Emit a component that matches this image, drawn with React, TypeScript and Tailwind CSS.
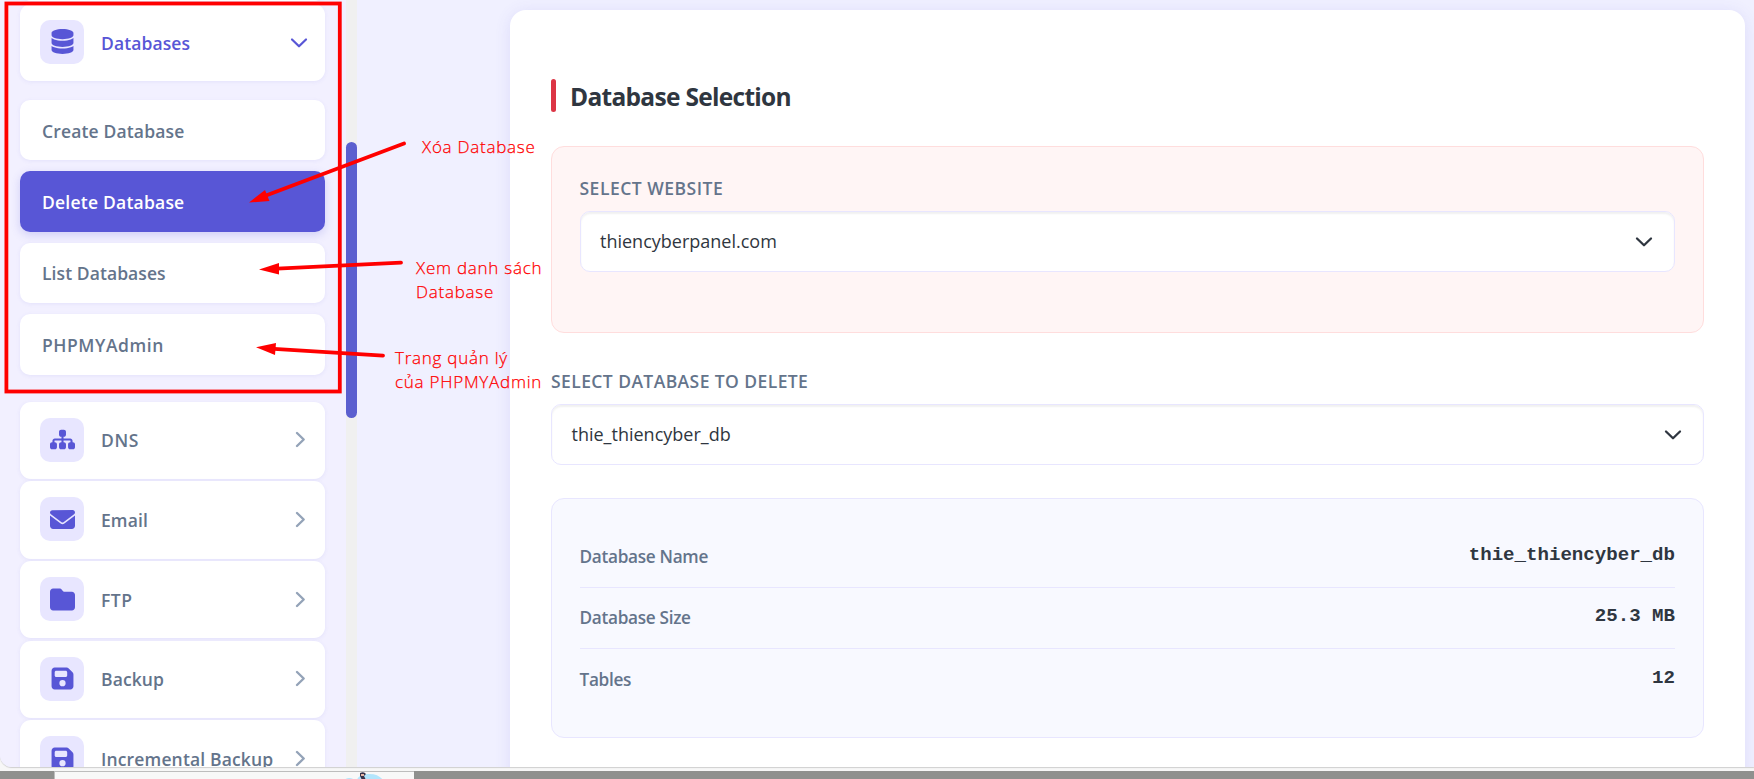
import { ReactNode } from "react";
import { FaDatabase, FaEnvelope, FaFloppyDisk, FaFolder, FaSitemap } from "react-icons/fa6";

function ChevronRight() {
  return (
    <svg width="11" height="17" viewBox="0 0 11 17" fill="none" stroke="#94a3b8" strokeWidth="2.4" strokeLinecap="round" strokeLinejoin="round">
      <path d="M2 2 L8.7 8.5 L2 15" />
    </svg>
  );
}

function ChevronDown({ color, width }: { color: string; width: number }) {
  return (
    <svg width="18" height="12" viewBox="0 0 18 12" fill="none" stroke={color} strokeWidth={width} strokeLinecap="round" strokeLinejoin="round">
      <path d="M2 2.5 L9 9.3 L16 2.5" />
    </svg>
  );
}

function IconTile({ children }: { children: ReactNode }) {
  return (
    <span className="flex h-[44px] w-[44px] shrink-0 items-center justify-center rounded-[10px] bg-[#e8e6ff] text-[25px] text-[#5856d6]">
      {children}
    </span>
  );
}

const cardShadow = "shadow-[0_1px_4px_rgba(88,86,214,0.09)]";

function MenuItem({ icon, label, spacing }: { icon: ReactNode; label: string; spacing: string }) {
  return (
    <div className={`flex h-[77.4px] shrink-0 items-center rounded-[11px] bg-white pr-[19px] pb-[1px] pl-[20px] ${cardShadow}`}>
      <IconTile>{icon}</IconTile>
      <span className={`ml-[17px] flex-1 whitespace-nowrap pt-[1px] text-[17.5px] leading-[26px] font-semibold text-[#64748b] ${spacing}`}>{label}</span>
      <ChevronRight />
    </div>
  );
}

function SubItem({ label, active, spacing }: { label: string; active?: boolean; spacing: string }) {
  return (
    <div
      className={
        active
          ? "flex h-[60.3px] shrink-0 items-center rounded-[10px] bg-[#5856d6] pl-[22px] text-[17.5px] font-semibold text-white shadow-[0_3px_10px_rgba(88,86,214,0.22)]"
          : `flex h-[60.3px] shrink-0 items-center rounded-[10px] bg-white pl-[22px] text-[17.5px] font-semibold text-[#64748b] ${cardShadow}`
      }
    >
      <span className={`whitespace-nowrap pt-[1px] ${spacing}`}>{label}</span>
    </div>
  );
}

function Sidebar() {
  return (
    <aside className="flex h-[767px] w-[346px] shrink-0 flex-col overflow-hidden bg-[#f2f0ff] pr-[21px] pl-[20px]">
      <div className={`-mt-[76.3px] h-[77.3px] shrink-0 rounded-[11px] bg-white ${cardShadow}`} />
      <div className={`mt-[2.7px] flex h-[77.3px] shrink-0 items-center rounded-[11px] bg-white pr-[17px] pb-px pl-[20px] ${cardShadow}`}>
        <IconTile>
          <FaDatabase />
        </IconTile>
        <span className="ml-[17px] flex-1 pt-[3px] text-[17.5px] font-semibold tracking-[0.1px] text-[#5856d6]">Databases</span>
        <span className="pt-[3px]">
          <ChevronDown color="#5856d6" width={2.2} />
        </span>
      </div>
      <div className="mt-[19px] flex shrink-0 flex-col gap-[11.2px]">
        <SubItem label="Create Database" spacing="tracking-[0.15px]" />
        <SubItem label="Delete Database" active spacing="tracking-[0.22px]" />
        <SubItem label="List Databases" spacing="tracking-[0.08px]" />
        <SubItem label="PHPMYAdmin" spacing="tracking-[0.55px]" />
      </div>
      <div className="mt-[26.8px] flex flex-col gap-[2.3px]">
        <MenuItem icon={<FaSitemap />} label="DNS" spacing="tracking-[0.6px]" />
        <MenuItem icon={<FaEnvelope />} label="Email" spacing="tracking-[0.1px]" />
        <MenuItem icon={<FaFolder />} label="FTP" spacing="tracking-[0.5px]" />
        <MenuItem icon={<FaFloppyDisk />} label="Backup" spacing="tracking-[0.1px]" />
        <MenuItem icon={<FaFloppyDisk />} label="Incremental Backup" spacing="tracking-[0.15px]" />
      </div>
    </aside>
  );
}

function SelectBox({ value }: { value: string }) {
  return (
    <div className="flex h-[61px] items-center rounded-[10px] border border-[#e8e6ff] bg-white pr-[21px] pl-[19.5px] shadow-[inset_0_2px_2px_rgba(0,0,0,0.06)]">
      <span className="flex-1 text-[18px] text-[#2f3640]">{value}</span>
      <ChevronDown color="#2f3640" width={2.3} />
    </div>
  );
}

function InfoRow({ label, value, last }: { label: string; value: string; last?: boolean }) {
  return (
    <div className={last ? "flex h-[61px] items-center justify-between" : "flex h-[61px] items-center justify-between border-b border-[#e8e6ff]"}>
      <span className="text-[17.2px] font-semibold tracking-[-0.3px] text-[#64748b]">{label}</span>
      <span className="pb-[3px] font-['Liberation_Mono',monospace] text-[19.1px] font-bold text-[#2f3640]">{value}</span>
    </div>
  );
}

const noteText =
  "absolute text-[17px] leading-[24px] font-light tracking-[0.75px] whitespace-nowrap text-[#ff0000] [-webkit-text-stroke:0.25px_#ff0000]";

function Annotations() {
  return (
    <div className="pointer-events-none absolute inset-0">
      <svg className="absolute inset-0" width="1754" height="779" viewBox="0 0 1754 779" fill="none" stroke="#ff0000" strokeWidth="3.8" strokeLinecap="round">
        <rect x="6.4" y="3.5" width="333.4" height="388" />
        <path d="M404 143.5 L266 195.5 M401 262.7 L277 268.7 M383 355.7 L274 348.8" />
        <path stroke="none" fill="#ff0000" d="M249 202.5 L265 190 L269.5 201 Z M259 269.5 L279 263 L279 274.5 Z M256 347.3 L276 343 L275 355 Z" />
      </svg>
      <p className={`top-[135px] left-[422px] ${noteText}`}>Xóa Database</p>
      <p className={`top-[256px] left-[416px] ${noteText}`}>
        Xem danh sách
        <br />
        Database
      </p>
      <p className={`top-[346px] left-[395px] ${noteText}`}>
        Trang quản lý
        <br />
        của PHPMYAdmin
      </p>
    </div>
  );
}

export default function App() {
  return (
    <div className="relative flex h-[779px] w-[1754px] flex-col overflow-hidden bg-[#f7f7f7] font-['Open_Sans','Noto_Sans',sans-serif]">
      <div className="flex h-[767px] shrink-0 overflow-hidden rounded-bl-[12px] bg-[#f0f0ff] shadow-[0_1px_1px_#cfcfcf]">
        <Sidebar />
        <div className="h-full w-[11px] shrink-0 bg-[#f0f0f0] pt-[142px]">
          <div className="h-[276px] rounded-full bg-[#5b5fcf]" />
        </div>
        <main className="flex-1 pt-[10px] pr-[9px] pl-[153px]">
          <section className="h-[790px] rounded-[16px] bg-white px-[41px] pt-[69px] shadow-[0_2px_16px_rgba(88,86,214,0.12)]">
            <div className="flex h-[33px] items-center">
              <span className="h-full w-[5px] rounded-[2.5px] bg-[#dc3545]" />
              <h2 className="ml-[14px] pt-[3px] text-[24.5px] font-bold tracking-[-0.7px] text-[#2f3640]">Database Selection</h2>
            </div>
            <div className="mt-[34px] h-[187px] rounded-[13px] border border-[#ffdddd] bg-[#fff5f5] pt-[29px] pr-[28px] pl-[27.5px]">
              <div className="h-[35px] text-[17.5px] leading-[24px] font-semibold tracking-[0.5px] text-[#64748b]">SELECT WEBSITE</div>
              <SelectBox value="thiencyberpanel.com" />
            </div>
            <div className="mt-[35px] h-[36px] text-[17.5px] leading-[26px] font-semibold tracking-[0.42px] text-[#64748b]">SELECT DATABASE TO DELETE</div>
            <SelectBox value="thie_thiencyber_db" />
            <div className="mt-[33px] h-[240px] rounded-[13px] border border-[#e8e6ff] bg-[#f8f9ff] pt-[28px] pr-[28px] pl-[27.5px]">
              <InfoRow label="Database Name" value="thie_thiencyber_db" />
              <InfoRow label="Database Size" value="25.3 MB" />
              <InfoRow label="Tables" value="12" last />
            </div>
          </section>
        </main>
      </div>
      <div className="mt-[4px] flex h-[8px] shrink-0">
        <div className="w-[54px] bg-[#8f908e]" />
        <div className="flex w-[360px] justify-end border-t border-l border-[#bdbdbd] bg-[#f8f8f8] pr-[30px]">
          <svg width="42" height="8" viewBox="0 0 42 8">
            <path d="M2 8 Q7 4 13 8 Z M15 8 Q16 3 25 2 Q36 1 41 8 Z" fill="#b3e5fc" />
            <path d="M18 1 Q22 -1 24 2 L22 4 L24 8 H20 L18 4 Z" fill="#373249" />
            <path d="M19 2 h3 v2 h-3 Z" fill="#e5b5a5" />
          </svg>
        </div>
        <div className="flex-1 bg-[#8f908e]" />
      </div>
      <Annotations />
    </div>
  );
}
